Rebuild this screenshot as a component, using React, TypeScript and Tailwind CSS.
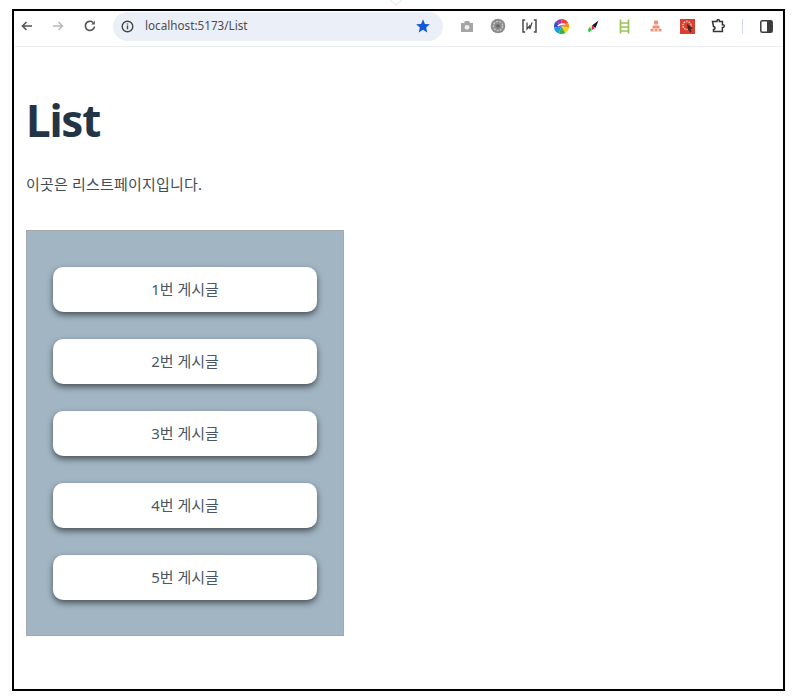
const posts = ['1번 게시글', '2번 게시글', '3번 게시글', '4번 게시글', '5번 게시글'];

const ToolbarSlot = ({ children }: { children: React.ReactNode }) => (
  <div className="flex h-[22px] w-[31.5px] shrink-0 items-center justify-center">{children}</div>
);

const BrowserBar = () => (
  <div className="flex h-[36px] shrink-0 items-center border-b border-[#ebedf0] pb-[5px]">
    {/* Navegación */}
    <div className="-ml-[3px] flex w-[102px] shrink-0 items-center">
      <ToolbarSlot>
        <svg width="14" height="14" viewBox="0 0 14 14" fill="none" stroke="#555" strokeWidth="1.6">
          <path d="M12 7H2.500M6.500 3L2.500 7l4 4" />
        </svg>
      </ToolbarSlot>
      <ToolbarSlot>
        <svg width="14" height="14" viewBox="0 0 14 14" fill="none" stroke="#b4b6b9" strokeWidth="1.4">
          <path d="M2 7h9.500M7.500 3l4 4-4 4" />
        </svg>
      </ToolbarSlot>
      <ToolbarSlot>
        <svg width="14" height="14" viewBox="0 0 14 14" fill="none" stroke="#555" strokeWidth="1.7">
          <path d="M11.500 7.500A4.600 4.600 0 1 1 10 3.400" />
          <path d="M11.800 1.800v3.600H8.200z" fill="#555" stroke="none" />
        </svg>
      </ToolbarSlot>
    </div>

    {/* Barra de direcciones */}
    <div className="flex h-[29px] w-[330px] shrink-0 items-center rounded-full bg-[#ebeff8] pl-[8px] pr-[12px]">
      <svg width="13" height="13" viewBox="0 0 13 13" fill="none" className="shrink-0">
        <circle cx="6.500" cy="6.500" r="5.300" stroke="#444" strokeWidth="1.400" />
        <path d="M6.500 5.600v3.600M6.500 3.400v1.200" stroke="#444" strokeWidth="1.400" />
      </svg>
      <span className="ml-[11px] font-['Noto_Sans',sans-serif] text-[11.7px] leading-none text-[#4c4c4c]">localhost:5173/List</span>
      <svg width="16" height="16" viewBox="0 0 24 24" fill="#1558d6" className="ml-auto">
        <path d="M12 2l2.900 6.900 7.400.6-5.600 4.900 1.700 7.300L12 17.800l-6.400 3.900 1.700-7.300L1.700 9.500l7.400-.6z" />
      </svg>
    </div>

    {/* Extensiones */}
    <div className="ml-[8px] flex items-center">
      <ToolbarSlot>
        <svg width="14" height="13" viewBox="0 0 14 13">
          <path d="M1 3h3l1-2h4l1 2h3v9H1z" fill="#a5a5a5" />
          <circle cx="7" cy="7.300" r="2.400" fill="#efefef" />
        </svg>
      </ToolbarSlot>
      <ToolbarSlot>
        <svg width="16" height="16" viewBox="0 0 16 16">
          <circle cx="8" cy="8" r="7.300" fill="#8d8d8d" />
          <circle cx="8" cy="8" r="4.600" fill="none" stroke="#c9c9c9" strokeWidth="1.400" strokeDasharray="2 1.200" />
          <circle cx="8" cy="8" r="1.800" fill="#666" />
        </svg>
      </ToolbarSlot>
      <ToolbarSlot>
        <svg width="15" height="14" viewBox="0 0 15 14" fill="none" stroke="#4a4a4a" strokeWidth="1.500">
          <path d="M3.200 1H1v12h2.200M11.800 1H14v12h-2.200" />
          <path d="M5 3.500V10l2.500-3 .3 3 2.200-6.500" strokeWidth="1.300" />
        </svg>
      </ToolbarSlot>
      <ToolbarSlot>
        <svg width="15" height="15" viewBox="0 0 16 16">
          <path d="M8 8L8 0A8 8 0 0 1 15 4z" fill="#ef4136" />
          <path d="M8 8L15 4A8 8 0 0 1 16 9z" fill="#f58a1f" />
          <path d="M8 8L16 9A8 8 0 0 1 12 15z" fill="#f6d41c" />
          <path d="M8 8L12 15A8 8 0 0 1 5 15.400z" fill="#35b34a" />
          <path d="M8 8L5 15.400A8 8 0 0 1 0 9z" fill="#1e9be0" />
          <path d="M8 8L0 9A8 8 0 0 1 2 2.700z" fill="#3a49c4" />
          <path d="M8 8L2 2.700A8 8 0 0 1 8 0z" fill="#9b37b8" />
          <path d="M4 7.500c2-2 5-2.500 8-2" stroke="#fff" strokeWidth="1.500" fill="none" />
        </svg>
      </ToolbarSlot>
      <ToolbarSlot>
        <svg width="13" height="13" viewBox="0 0 13 13">
          <path d="M12.500 0.500L9.500 8 6 5.500z" fill="#1a1a1a" />
          <path d="M6 5.500L9 8 6 10z" fill="#e5176e" />
          <path d="M3.500 7L6 5.500 6 10z" fill="#f4e61a" />
          <path d="M2 10L3.500 7 6 10 3 12.500z" fill="#27c24c" />
        </svg>
      </ToolbarSlot>
      <ToolbarSlot>
        <svg width="13" height="15" viewBox="0 0 13 15" fill="none" stroke="#9ac25a" strokeWidth="1.700">
          <path d="M2.500 0.500v14M10.500 0.500v14M2.500 4h8M2.500 8h8M2.500 12h8" />
        </svg>
      </ToolbarSlot>
      <ToolbarSlot>
        <svg width="12" height="12" viewBox="0 0 12 12" fill="#ee9278">
          <circle cx="6" cy="2.500" r="2.300" />
          <path d="M3 5.500h6l1 3H2z" />
          <path d="M0.500 9h3v2.500h-3zM4.500 9h3v2.500h-3zM8.500 9h3v2.500h-3z" />
        </svg>
      </ToolbarSlot>
      <ToolbarSlot>
        <svg width="15" height="15" viewBox="0 0 15 15">
          <rect width="15" height="15" fill="#d9402f" />
          <circle cx="7" cy="6.500" r="4" fill="none" stroke="#f6c8c0" strokeWidth="1.500" strokeDasharray="1.500 1" />
          <path d="M7 5l6 4-2.500 1 1 3-1.500.5-1-3L8 12z" fill="#4a2320" />
        </svg>
      </ToolbarSlot>
      <ToolbarSlot>
        <svg width="15" height="14" viewBox="0 0 15 14" fill="none" stroke="#333" strokeWidth="1.500">
          <path d="M1.500 2.500H6V1.800a1.200 1.200 0 0 1 2.400 0v.7h3v3.300h.6a1.300 1.300 0 0 1 0 2.600h-.6v4.100H2.500V10.500a1.500 1.500 0 0 0 0-3z" />
        </svg>
      </ToolbarSlot>
    </div>
    <div className="ml-[7px] h-[15px] w-px shrink-0 bg-[#cfdcf3]" />
    <div className="ml-[8px]">
      <ToolbarSlot>
        <svg width="13" height="13" viewBox="0 0 13 13">
          <rect x="0.800" y="0.800" width="11.400" height="11.400" rx="1.500" fill="#fff" stroke="#3c3c3c" strokeWidth="1.500" />
          <rect x="7" y="1" width="5" height="11" fill="#3c3c3c" />
        </svg>
      </ToolbarSlot>
    </div>
  </div>
);

export default function App() {
  return (
    <div className="relative h-[697px] w-[793px] overflow-hidden bg-white pl-[12px] pt-[9px]">
      {/* Resto del popup de favoritos sobre el marco */}
      <svg width="14" height="6" viewBox="0 0 14 6" fill="none" className="absolute left-[389px] top-0">
        <path d="M1 0l6 5 6-5" stroke="#e4e4e4" />
      </svg>

      <div className="flex h-[682px] w-[773px] flex-col border-2 border-black bg-white">
        <BrowserBar />

        <main className="flex flex-col items-start pl-[12px] font-['Noto_Sans','Noto_Sans_CJK_KR',sans-serif] text-[#3f4d5b]">
          <h1 className="mt-[42px] text-[44px] font-bold leading-[62px] tracking-[-1.2px] text-[#213547]">List</h1>
          <p className="mt-[22px] text-[15px] leading-[22px] tracking-[0.2px]">이곳은 리스트페이지입니다.</p>

          {/* Lista de publicaciones */}
          <div className="mt-[35px] flex h-[406px] w-[318px] flex-col gap-[27px] border border-[#a3a8ac] bg-[#a1b5c3] px-[26px] pt-[36px]">
            {posts.map((post) => (
              <div
                key={post}
                className="flex h-[45px] shrink-0 items-center justify-center rounded-[10px] bg-white text-[15px] text-[#4a5661] shadow-[0_3px_6px_rgba(0,0,0,0.55)]"
              >
                {post}
              </div>
            ))}
          </div>
        </main>
      </div>
    </div>
  );
}
